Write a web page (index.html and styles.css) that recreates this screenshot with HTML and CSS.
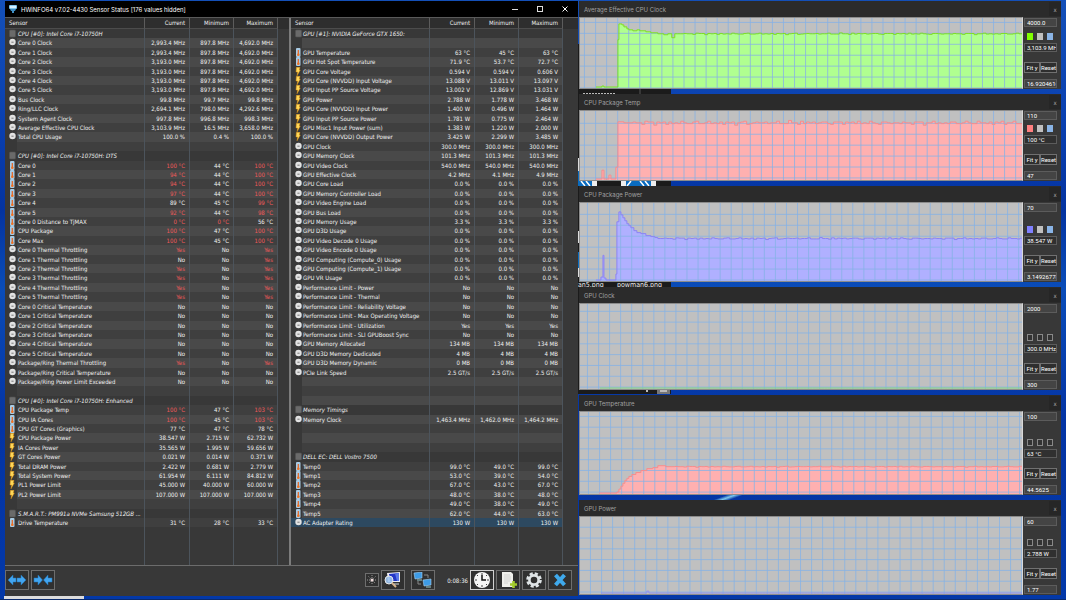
FILE: index.html
```html
<!DOCTYPE html>
<html lang="en">
<head>
<meta charset="UTF-8">
<meta name="viewport" content="width=device-width, initial-scale=1">
<title>HWiNFO64 v7.02-4430 Sensor Status</title>
<link rel="stylesheet" href="styles.css">
</head>
<body>

  <!-- Shared row icons -->
  <svg class="symbols" aria-hidden="true">
    <symbol id="icon-clock" viewBox="0 0 8 9">
      <circle cx="4.500" cy="4" r="3.200" fill="#e2e2e2"/>
      <path d="M3.400 4.200H5.600" stroke="#777"/>
    </symbol>
    <symbol id="icon-temp" viewBox="0 0 8 9">
      <rect x="2" y="0" width="4.500" height="9" rx="1" fill="#a9cbe4"/>
      <path d="M4.300 2V6" stroke="#e8641e" stroke-width="1.200"/>
      <circle cx="4.300" cy="6.800" r="1.300" fill="#f07020"/>
    </symbol>
    <symbol id="icon-power" viewBox="0 0 8 9">
      <path d="M2.400 0.300H6L5.300 3H6.300L3 8.800L3.600 5H2Z" fill="#ffd95a" stroke="#d98a10" stroke-width="0.500"/>
    </symbol>
    <symbol id="icon-chip" viewBox="0 0 8 9">
      <rect x="1.500" y="1" width="6" height="7" rx="1" fill="#6a6a6a" stroke="#525252" stroke-width="0.600"/>
    </symbol>
  </svg>

  <!-- Image folder that lies behind the other windows -->
  <div class="explorer" aria-hidden="true">
    <svg class="explorer-bits" viewBox="0 0 93 350">
      <path d="M5 49.500H37" stroke="#bbb" stroke-dasharray="2 1"/>
      <path d="M62 45V51" stroke="#555"/>
      <rect x="0" y="114" width="2" height="13" fill="#ddd"/>
      <rect x="0" y="127" width="19" height="15" fill="#0a6cc0"/>
      <path d="M3 137L7 142M8 137L12 142" stroke="#fff" stroke-width="1.500"/>
      <rect x="14" y="137" width="5" height="5" fill="#eee"/>
      <rect x="43" y="137" width="35" height="5" fill="#0a6cc0"/>
      <rect x="43" y="137" width="5" height="5" fill="#eee"/>
      <rect x="73" y="137" width="5" height="5" fill="#eee"/>
      <path d="M53 137L49 142M62 137L66 142M67 137L71 142" stroke="#fff" stroke-width="1.500"/>
      <rect x="0" y="187" width="2" height="12" fill="#ddd"/>
      <rect x="0" y="208" width="2" height="16" fill="#0a6cc0"/>
      <rect x="0" y="224" width="2" height="9" fill="#ddd"/>
      <rect x="79" y="346" width="13" height="4" fill="#777"/>
      <rect x="82" y="346" width="7" height="2" fill="#bbb"/>
      <rect x="68" y="346" width="2" height="2" fill="#bbb"/>
    </svg>
    <span class="file-name file-name-a">an5.png</span>
    <span class="file-name file-name-b">powman6.png</span>
  </div>
  <div class="wallpaper-glow" aria-hidden="true"></div>

  <main class="windows">

    <!-- Sensor status window -->
    <section class="sensors" aria-label="Sensor Status">
      <header class="titlebar">
        <svg class="app-icon" viewBox="0 0 8 8" aria-hidden="true">
          <rect x="0" y="0" width="8" height="4" rx="1" fill="#7fc4e8"/>
          <rect x="1" y="1" width="6" height="2" fill="#d8f0ff"/>
          <path d="M1 4H7L6 6H5V8H3V6H2Z" fill="#3f8fc4"/>
        </svg>
        <h1 class="titlebar-text">HWiNFO64 v7.02-4430 Sensor Status [176 values hidden]</h1>
        <button class="window-button" aria-label="Minimize">
          <svg viewBox="0 0 8 8"><path d="M1 4.500H7" stroke="#ddd" fill="none"/></svg>
        </button>
        <button class="window-button" aria-label="Maximize">
          <svg viewBox="0 0 8 8"><rect x="1.500" y="1.500" width="5" height="5" stroke="#ddd" fill="none"/></svg>
        </button>
        <button class="window-button" aria-label="Close">
          <svg viewBox="0 0 8 8"><path d="M1.500 1.500L6.500 6.500M6.500 1.500L1.500 6.500" stroke="#fff" fill="none"/></svg>
        </button>
      </header>

      <div class="panes">
        <table class="pane pane-left">
          <thead>
            <tr><th scope="col" class="head-name">Sensor</th><th scope="col">Current</th><th scope="col">Minimum</th><th scope="col">Maximum</th></tr>
          </thead>
          <tbody id="cpuRows"></tbody>
        </table>
        <table class="pane pane-right">
          <thead>
            <tr><th scope="col" class="head-name">Sensor</th><th scope="col">Current</th><th scope="col">Minimum</th><th scope="col">Maximum</th></tr>
          </thead>
          <tbody id="gpuRows"></tbody>
        </table>
      </div>

      <footer class="toolbar">
        <div class="tool-group">
          <button class="tool" aria-label="Expand columns">
            <svg viewBox="0 0 20 16"><path d="M1 8L6 3V6H9V10H6V13ZM19 8L14 3V6H10V10H14V13Z" fill="#42a5f0" stroke="#2277b8" stroke-width="0.500"/></svg>
          </button>
          <button class="tool" aria-label="Shrink columns">
            <svg viewBox="0 0 20 16"><path d="M9.500 8L5 3V6H1V10H5V13ZM10.500 8L15 3V6H19V10H15V13Z" fill="#42a5f0" stroke="#2277b8" stroke-width="0.500"/></svg>
          </button>
        </div>
        <div class="tool-group">
          <button class="tool tool-small" aria-label="Hide sensors">
            <svg viewBox="0 0 12 12"><path d="M6 1V11M1 6H11M2.500 2.500L9.500 9.500M9.500 2.500L2.500 9.500" stroke="#999" stroke-dasharray="1 1"/><circle cx="6" cy="6" r="1.500" fill="#f3dede"/></svg>
          </button>
          <button class="tool" aria-label="System summary">
            <svg viewBox="0 0 20 16"><path d="M4 1L17 0V10H5Z" fill="#ececf4"/><path d="M6 2L16 1V9H7Z" fill="#2436c8"/><path d="M12 1.500L16 1V9H14Z" fill="#5a78e8"/><circle cx="6" cy="8" r="4" fill="#9fc4f0" fill-opacity="0.900" stroke="#e8e8e8"/><path d="M9 11L13 15" stroke="#d8b48a" stroke-width="2"/><path d="M11 12H16" stroke="#ddd"/></svg>
          </button>
          <button class="tool tool-network" aria-label="Network sensors">
            <svg viewBox="0 0 20 16"><path d="M11 3H15V6M5 9V12H8" stroke="#888" fill="none"/><path d="M1 1L9 0V6L2 7Z" fill="#3d9be6" stroke="#a8d4f4" stroke-width="0.600"/><path d="M4 8H9" stroke="#9cc"/><path d="M10 8L18 7V13L11 14Z" fill="#3d9be6" stroke="#a8d4f4" stroke-width="0.600"/><path d="M13 15H18" stroke="#9cc"/></svg>
          </button>
          <time class="elapsed">0:08:36</time>
          <button class="tool tool-active" aria-label="Reset clock">
            <svg viewBox="0 0 20 16"><circle cx="10" cy="8" r="8" fill="#f6f6f6"/><path d="M10 1V3M10 13V15M3 8H5M15 8H17M5 3L6 4M15 3L14 4M5 13L6 12M15 13L14 12" stroke="#444"/><path d="M10 3V8H14" stroke="#111" stroke-width="1.500" fill="none"/></svg>
          </button>
          <button class="tool" aria-label="Start logging">
            <svg viewBox="0 0 20 16"><path d="M4 0H13L15 2V15H4Z" fill="#f0f0ec"/><path d="M6 3H12M6 5H13M6 7H13M6 9H12M6 11H10" stroke="#c4c4c4" stroke-width="0.600"/><path d="M15.500 9V16M12 12.500H19" stroke="#a4cc2c" stroke-width="2.600"/></svg>
          </button>
          <button class="tool" aria-label="Settings">
            <svg viewBox="0 0 20 16"><circle cx="10" cy="8" r="6.500" fill="none" stroke="#dfe4e6" stroke-width="2.600" stroke-dasharray="3.100 2"/><circle cx="10" cy="8" r="4.600" fill="none" stroke="#dfe4e6" stroke-width="2.600"/></svg>
          </button>
          <button class="tool" aria-label="Close sensors">
            <svg viewBox="0 0 20 16"><path d="M5.500 3L14.500 13M14.500 3L5.500 13" stroke="#3fa9ec" stroke-width="4"/></svg>
          </button>
        </div>
      </footer>
    </section>

    <!-- Graph windows, filled by script.js -->
    <div class="graphs" id="graphs"></div>
  </main>

  <footer class="desktop-edge"><div class="preview"></div></footer>

<script src="script.js"></script>
</body>
</html>
```
FILE: styles.css
```css
* {
  box-sizing: border-box;
}
body {
  margin: 0;
  height: 100vh;
  display: flex;
  flex-direction: column;
  overflow: hidden;
  position: relative;
  background: linear-gradient(180deg, #1450b8 0%, #0a40b0 20%, #0433a0 35%, #0a4cb8 48%, #0434a4 70%, #0338a8 100%);
  color: #f0f0f0;
  font-family: "DejaVu Sans Condensed", "DejaVu Sans", sans-serif;
  font-size: 6px;
  line-height: 9px;
}
button, input {
  font: inherit;
  color: inherit;
  margin: 0;
  padding: 0;
  border-radius: 0;
}
.symbols {
  display: none;
}

/* Desktop behind the windows */
.explorer {
  position: absolute;
  left: 578px;
  top: 44px;
  width: 93px;
  height: 350px;
  background: #1b1b1b;
  overflow: hidden;
}
.explorer-bits {
  display: block;
  width: 93px;
  height: 350px;
}
.file-name {
  position: absolute;
  top: 237px;
  font-size: 7px;
}
.file-name-a {
  left: 0;
}
.file-name-b {
  left: 39px;
}
.wallpaper-glow {
  position: absolute;
  left: 670px;
  top: 480px;
  width: 130px;
  height: 30px;
  background: linear-gradient(160deg, transparent 46%, #7cc8ec 50%, transparent 54%);
}
.windows {
  flex: 1;
  min-height: 0;
  display: flex;
  gap: 1px;
  padding: 1px 5px 0;
  position: relative;
}

/* Sensor window */
.sensors {
  flex: 573 1 0;
  min-width: 0;
  display: flex;
  flex-direction: column;
  background: #383838;
}
.titlebar {
  height: 16px;
  flex: none;
  display: flex;
  align-items: center;
  background: #000;
  padding: 0 4px;
}
.app-icon {
  width: 8px;
  height: 8px;
}
.titlebar-text {
  flex: 1;
  margin: 0 0 0 4px;
  font-family: Inter, sans-serif;
  font-size: 6px;
  font-weight: 400;
  color: #fff;
}
.window-button {
  width: 18px;
  height: 16px;
  margin-left: 7px;
  background: none;
  border: none;
  display: flex;
  align-items: center;
  justify-content: center;
}
.window-button svg {
  width: 8px;
  height: 8px;
}
.panes {
  flex: 1;
  min-height: 0;
  display: flex;
  border-top: 1px solid #5a5a5a;
  border-bottom: 1px solid #6c6c6c;
}

/* Sensor tables */
.pane {
  display: flex;
  flex-direction: column;
  min-width: 0;
}
.pane-left {
  flex: 285 1 0;
  --columns: 12px minmax(0, 1fr) 45px 44px 44px 11px;
}
.pane-right {
  flex: 288 1 0;
  border-left: 2px solid #7c7c7c;
  --columns: 11px minmax(0, 1fr) 45px 44px 44px 15px;
}
.pane thead {
  display: block;
  background: #2e2e2e;
}
.pane tbody {
  flex: 1;
  min-height: 0;
  display: grid;
  grid-template-rows: repeat(57, minmax(0, 1fr));
}
.pane tr {
  display: grid;
  grid-template-columns: var(--columns);
}
.pane th,
.pane td {
  padding: 0 4px 0 0;
  border-right: 1px solid #4c545c;
  text-align: right;
  font-weight: 400;
  white-space: nowrap;
}
.pane th {
  height: 11px;
  line-height: 9px;
  border-right-color: #5c5c5c;
  border-bottom: 1px solid #4c4c4c;
}
.pane .head-name {
  grid-column: 1 / 3;
  text-align: left;
  padding-left: 4px;
}
.pane .icon-cell {
  padding: 0;
  border: none;
  text-align: left;
}
.pane .name-cell {
  text-align: left;
  padding: 0 0 0 1px;
  overflow: hidden;
}
.dark td {
  background: #3f3f3f;
}
.light td {
  background: #494949;
}
.dark .icon-cell,
.light .icon-cell {
  background: none;
}
.category .name-cell {
  font-style: italic;
}
.selected {
  background: linear-gradient(#2d4960, #2d4960) 0 0 / calc(100% - 15px) 100% no-repeat;
}
.filler {
  grid-row: span 4;
}
.row-icon {
  display: block;
  width: 8px;
  height: 9px;
  margin-left: 3px;
}
.alert {
  color: #f05a5a;
}

/* Bottom toolbar */
.toolbar {
  flex: none;
  height: 30px;
  display: flex;
  justify-content: space-between;
  align-items: flex-start;
  padding: 4px 6px 0 0;
}
.tool-group {
  display: flex;
  align-items: center;
  gap: 2px;
}
.tool {
  width: 24px;
  height: 20px;
  display: flex;
  align-items: center;
  justify-content: center;
  background: #303030;
  border: 1px solid #6e6e6e;
}
.tool svg {
  width: 20px;
  height: 16px;
}
.tool-small {
  width: 14px;
  height: 14px;
}
.tool-small svg {
  width: 12px;
  height: 12px;
}
.tool-network {
  margin-left: 4px;
}
.tool-active {
  border-color: #d0d0d0;
}
.elapsed {
  margin-left: 10px;
}

/* Graph windows */
.graphs {
  flex: 482 1 0;
  min-width: 0;
  display: flex;
  flex-direction: column;
  gap: 5px;
  padding-bottom: 1px;
}
.graph {
  min-height: 0;
  display: flex;
  flex-direction: column;
  background: #383838;
}
.graph-avg-clock { flex: 88 1 0; }
.graph-package-temp { flex: 87 1 0; }
.graph-package-power { flex: 96 1 0; }
.graph-gpu-clock { flex: 103 1 0; }
.graph-gpu-temp { flex: 100 1 0; }
.graph-gpu-power { flex: 95 1 0; }

.graph-title {
  flex: none;
  height: 16px;
  display: flex;
  justify-content: space-between;
  align-items: center;
  padding: 0 0 0 5px;
  background: #2b2b2b;
}
.graph-title h2 {
  margin: 0;
  font-family: Inter, sans-serif;
  font-size: 6px;
  font-weight: 400;
  color: #a0a0a0;
}
.graph-close {
  width: 12px;
  height: 14px;
  background: #262626;
  border: none;
  color: #aaa;
}
.graph-body {
  flex: 1;
  min-height: 0;
  display: flex;
}
.plot {
  flex: 1;
  min-width: 0;
  border: 1px solid #8c8c8c;
  border-right-color: #d8d8d8;
  background: #c0c0c0;
}
.plot svg {
  display: block;
  width: 100%;
  height: 100%;
}
.grid-lines {
  stroke: #86b2e6;
  stroke-opacity: 0.8;
  fill: none;
}
.side {
  flex: none;
  width: 38px;
  padding: 1px 4px 1px 1px;
  display: flex;
  flex-direction: column;
  font-family: Roboto, sans-serif;
}
.field {
  display: block;
  width: 33px;
  height: 9px;
  padding: 0 0 0 2px;
  background: #444;
  border: 1px solid #5c5c5c;
  color: #fff;
}
.field-value {
  background: #303030;
}
.swatches {
  display: flex;
  gap: 4px;
  margin-top: auto;
  padding: 0 3px 3px;
}
.swatch {
  width: 6px;
  height: 7px;
  border: 1px solid #888;
  background: #333;
}
.swatch-green { background: #80ff00; border-color: #80ff00; }
.swatch-red { background: #ff8080; border-color: #ff8080; }
.swatch-purple { background: #8080ff; border-color: #8080ff; }
.swatch-grey { background: #c0c0c0; border-color: #c0c0c0; }
.swatch-blue { background: #8ab4e6; border-color: #8ab4e6; }
.graph-buttons {
  display: flex;
  padding: 10px 0 6px;
}
.graph-buttons button {
  flex: none;
  width: 16px;
  height: 11px;
  background: #2e2e2e;
  border: 1px solid #707070;
  white-space: nowrap;
  display: flex;
  align-items: center;
  justify-content: center;
  color: #fff;
}
.graph-buttons button:last-child {
  width: 17px;
}

/* Strip below the windows */
.desktop-edge {
  flex: none;
  height: 4px;
  padding-left: 4px;
  border-bottom: 1px solid #0a2a6c;
  position: relative;
}
.preview {
  width: 80px;
  height: 3px;
  background: #dcdcdc;
}
```
FILE: script.js
```js
// Rows: kind|name|current|minimum|maximum, a leading ! marks a value over its limit
const cpuData = `
chip|CPU [#0]: Intel Core i7-10750H
clock|Core 0 Clock|2,993.4 MHz|897.8 MHz|4,692.0 MHz
clock|Core 1 Clock|2,993.4 MHz|897.8 MHz|4,692.0 MHz
clock|Core 2 Clock|3,193.0 MHz|897.8 MHz|4,692.0 MHz
clock|Core 3 Clock|3,193.0 MHz|897.8 MHz|4,692.0 MHz
clock|Core 4 Clock|3,193.0 MHz|897.8 MHz|4,692.0 MHz
clock|Core 5 Clock|3,193.0 MHz|897.8 MHz|4,692.0 MHz
clock|Bus Clock|99.8 MHz|99.7 MHz|99.8 MHz
clock|Ring/LLC Clock|2,694.1 MHz|798.0 MHz|4,292.6 MHz
clock|System Agent Clock|997.8 MHz|996.8 MHz|998.3 MHz
clock|Average Effective CPU Clock|3,103.9 MHz|16.5 MHz|3,658.0 MHz
clock|Total CPU Usage|100.0 %|0.4 %|100.0 %
blank
chip|CPU [#0]: Intel Core i7-10750H: DTS
temp|Core 0|!100 °C|44 °C|!100 °C
temp|Core 1|!94 °C|44 °C|!100 °C
temp|Core 2|!94 °C|44 °C|!100 °C
temp|Core 3|!97 °C|44 °C|!100 °C
temp|Core 4|89 °C|45 °C|!99 °C
temp|Core 5|!92 °C|44 °C|!98 °C
temp|Core 0 Distance to TjMAX|!0 °C|!0 °C|56 °C
temp|CPU Package|!100 °C|47 °C|!100 °C
temp|Core Max|!100 °C|45 °C|!100 °C
clock|Core 0 Thermal Throttling|!Yes|No|!Yes
clock|Core 1 Thermal Throttling|No|No|!Yes
clock|Core 2 Thermal Throttling|!Yes|No|!Yes
clock|Core 3 Thermal Throttling|!Yes|No|!Yes
clock|Core 4 Thermal Throttling|!Yes|No|!Yes
clock|Core 5 Thermal Throttling|!Yes|No|!Yes
clock|Core 0 Critical Temperature|No|No|No
clock|Core 1 Critical Temperature|No|No|No
clock|Core 2 Critical Temperature|No|No|No
clock|Core 3 Critical Temperature|No|No|No
clock|Core 4 Critical Temperature|No|No|No
clock|Core 5 Critical Temperature|No|No|No
clock|Package/Ring Thermal Throttling|!Yes|No|!Yes
clock|Package/Ring Critical Temperature|No|No|No
clock|Package/Ring Power Limit Exceeded|No|No|No
blank
chip|CPU [#0]: Intel Core i7-10750H: Enhanced
temp|CPU Package Temp|!100 °C|47 °C|!103 °C
temp|CPU IA Cores|!100 °C|45 °C|!103 °C
temp|CPU GT Cores (Graphics)|77 °C|47 °C|78 °C
power|CPU Package Power|38.547 W|2.715 W|62.732 W
power|IA Cores Power|35.565 W|1.995 W|59.656 W
power|GT Cores Power|0.021 W|0.014 W|0.371 W
power|Total DRAM Power|2.422 W|0.681 W|2.779 W
power|Total System Power|61.954 W|6.111 W|84.812 W
power|PL1 Power Limit|45.000 W|40.000 W|60.000 W
power|PL2 Power Limit|107.000 W|107.000 W|107.000 W
blank
chip|S.M.A.R.T.: PM991a NVMe Samsung 512GB ...
temp|Drive Temperature|31 °C|28 °C|33 °C`;

const gpuData = `
chip|GPU [#1]: NVIDIA GeForce GTX 1650:
blank
temp|GPU Temperature|63 °C|45 °C|63 °C
temp|GPU Hot Spot Temperature|71.9 °C|53.7 °C|72.7 °C
power|GPU Core Voltage|0.594 V|0.594 V|0.606 V
power|GPU Core (NVVDD) Input Voltage|13.088 V|13.011 V|13.097 V
power|GPU Input PP Source Voltage|13.002 V|12.869 V|13.031 V
power|GPU Power|2.788 W|1.778 W|3.468 W
power|GPU Core (NVVDD) Input Power|1.400 W|0.496 W|1.464 W
power|GPU Input PP Source Power|1.781 W|0.775 W|2.464 W
power|GPU Misc1 Input Power (sum)|1.383 W|1.220 W|2.000 W
power|GPU Core (NVVDD) Output Power|3.425 W|2.299 W|3.485 W
clock|GPU Clock|300.0 MHz|300.0 MHz|300.0 MHz
clock|GPU Memory Clock|101.3 MHz|101.3 MHz|101.3 MHz
clock|GPU Video Clock|540.0 MHz|540.0 MHz|540.0 MHz
clock|GPU Effective Clock|4.2 MHz|4.1 MHz|4.9 MHz
clock|GPU Core Load|0.0 %|0.0 %|0.0 %
clock|GPU Memory Controller Load|0.0 %|0.0 %|0.0 %
clock|GPU Video Engine Load|0.0 %|0.0 %|0.0 %
clock|GPU Bus Load|0.0 %|0.0 %|0.0 %
clock|GPU Memory Usage|3.3 %|3.3 %|3.3 %
clock|GPU D3D Usage|0.0 %|0.0 %|0.0 %
clock|GPU Video Decode 0 Usage|0.0 %|0.0 %|0.0 %
clock|GPU Video Encode 0 Usage|0.0 %|0.0 %|0.0 %
clock|GPU Computing (Compute_0) Usage|0.0 %|0.0 %|0.0 %
clock|GPU Computing (Compute_1) Usage|0.0 %|0.0 %|0.0 %
clock|GPU VR Usage|0.0 %|0.0 %|0.0 %
clock|Performance Limit - Power|No|No|No
clock|Performance Limit - Thermal|No|No|No
clock|Performance Limit - Reliability Voltage|No|No|No
clock|Performance Limit - Max Operating Voltage|No|No|No
clock|Performance Limit - Utilization|Yes|Yes|Yes
clock|Performance Limit - SLI GPUBoost Sync|No|No|No
clock|GPU Memory Allocated|134 MB|134 MB|134 MB
clock|GPU D3D Memory Dedicated|4 MB|4 MB|4 MB
clock|GPU D3D Memory Dynamic|0 MB|0 MB|0 MB
clock|PCIe Link Speed|2.5 GT/s|2.5 GT/s|2.5 GT/s
blank
blank
blank
chip|Memory Timings
clock|Memory Clock|1,463.4 MHz|1,462.0 MHz|1,464.2 MHz
blank
blank
blank
chip|DELL EC: DELL Vostro 7500
temp|Temp0|99.0 °C|49.0 °C|99.0 °C
temp|Temp1|53.0 °C|39.0 °C|54.0 °C
temp|Temp2|67.0 °C|43.0 °C|67.0 °C
temp|Temp3|48.0 °C|38.0 °C|48.0 °C
temp|Temp4|49.0 °C|38.0 °C|49.0 °C
temp|Temp5|62.0 °C|44.0 °C|63.0 °C
clock|AC Adapter Rating|130 W|130 W|130 W`;

function valueCell(value) {
  if (!value) return '<td></td>';
  return value[0] === '!' ? `<td class="alert">${value.slice(1)}</td>` : `<td>${value}</td>`;
}

function fillTable(id, data) {
  const rows = data.trim().split('\n').map((line, i) => {
    const [kind, name, current, minimum, maximum] = line.split('|');
    let rowClass = i % 2 ? 'light' : 'dark';
    if (kind === 'chip') rowClass = 'category';
    if (name === 'AC Adapter Rating') rowClass = 'selected';
    const icon = kind === 'blank' ? '' : `<svg class="row-icon" aria-hidden="true"><use href="#icon-${kind}"/></svg>`;
    return `<tr class="${rowClass}"><td class="icon-cell">${icon}</td><td class="name-cell">${name || ''}</td>` +
      valueCell(current) + valueCell(minimum) + valueCell(maximum) + '</tr>';
  });
  rows.push('<tr class="filler"><td class="icon-cell"></td><td></td><td></td><td></td><td></td></tr>');
  document.getElementById(id).innerHTML = rows.join('');
}

fillTable('cpuRows', cpuData);
fillTable('gpuRows', gpuData);

// Graphs: points are [x, y] in the plot's own 443-wide space, then the line settles at level
const graphs = [
  { key: 'avg-clock', title: 'Average Effective CPU Clock', max: '4000.0', value: '3,103.9 MHz', min: '16.92046163', h: 71, gx: 4, gy: 4,
    line: '#80e020', fill: '#b0ff90', swatch: 'green', level: 16, noise: 0.6,
    points: [[16, 70], [22, 69], [24, 70], [38, 22], [39, 6], [42, 7], [44, 9], [47, 11], [49, 12], [53, 13], [57, 12], [60, 13], [66, 14], [71, 15], [78, 16], [84, 17], [88, 16], [92, 20], [95, 16]] },
  { key: 'package-temp', title: 'CPU Package Temp', max: '110', value: '100 °C', min: '47', h: 70, gx: 4, gy: 12,
    line: '#f88c8c', fill: '#ffb0b0', swatch: 'red', level: 12, noise: 1.6,
    points: [[16, 69], [22, 60], [24, 69], [29, 65], [31, 69], [36, 57], [38, 11], [44, 12]] },
  { key: 'package-power', title: 'CPU Package Power', max: '70', value: '38.547 W', min: '3.149267782', h: 79, gx: 7, gy: 11,
    line: '#8c84f4', fill: '#b0b0ff', swatch: 'purple', level: 36, noise: 0.7,
    points: [[16, 78], [21, 75], [23, 53], [24, 76], [26, 78], [36, 72], [37, 19], [39, 9], [41, 12], [43, 15], [45, 18], [47, 21], [49, 23], [51, 25], [54, 28], [57, 30], [61, 31], [66, 33], [71, 34], [75, 35]] },
  { key: 'gpu-clock', title: 'GPU Clock', max: '2000', value: '300.0 MHz', min: '300', h: 87, gx: 7, gy: 7,
    line: '#80d880', fill: 'none', level: 86, noise: 0, points: [[20, 86]] },
  { key: 'gpu-temp', title: 'GPU Temperature', max: '100', value: '63 °C', min: '44.5625', h: 84, gx: 8, gy: 4,
    line: '#f88c8c', fill: '#ffb0b0', level: 56, noise: 0.4,
    points: [[19, 83], [37, 82], [39, 79], [41, 76], [43, 73], [45, 70], [47, 68], [49, 66], [52, 64], [56, 62], [61, 60], [67, 58], [73, 57], [78, 55], [86, 56]] },
  { key: 'gpu-power', title: 'GPU Power', max: '60', value: '2.788 W', min: '1.77', h: 79, gx: 10, gy: 10,
    line: '#9090f0', fill: 'none', level: 78, noise: 0, points: [[21, 78], [67, 76], [69, 78]] }
];

function stepPath(g) {
  const pts = g.points.slice();
  for (let x = pts[pts.length - 1][0] + 3, i = 0; x < 443; x += 3, i++) {
    const wave = Math.sin(i * 2.3) * Math.cos(i * 0.7) + Math.sin(i * 5.1) * 0.4;
    pts.push([x, (g.level + Math.round(wave * 2) / 2 * g.noise).toFixed(1)]);
  }
  return `M${pts[0][0]} ${g.h - 1}` + pts.map(p => `H${p[0]}V${p[1]}`).join('') + 'H443';
}

function gridPath(g) {
  const step = 11.08;
  let d = '';
  for (let x = g.gx + 0.5; x < 443; x += step) d += `M${x.toFixed(2)} 0V${g.h}`;
  for (let y = g.gy + 0.5; y < g.h; y += step) d += `M0 ${y.toFixed(2)}H443`;
  return d;
}

document.getElementById('graphs').innerHTML = graphs.map(g => {
  const path = stepPath(g);
  const swatches = g.swatch ? [` swatch-${g.swatch}`, ' swatch-grey', ' swatch-blue'] : ['', '', ''];
  const labels = ['Line colour', 'Background colour', 'Grid colour'];
  return `
  <section class="graph graph-${g.key}" aria-label="${g.title}">
    <header class="graph-title"><h2>${g.title}</h2><button class="graph-close" aria-label="Close graph">x</button></header>
    <div class="graph-body">
      <div class="plot">
        <svg viewBox="0 0 443 ${g.h}" preserveAspectRatio="none" aria-hidden="true">
          <path d="${path}V${g.h}H${g.points[0][0]}Z" fill="${g.fill}"/>
          <path class="grid-lines" d="${gridPath(g)}"/>
          <path d="${path}" fill="none" stroke="${g.line}"/>
        </svg>
      </div>
      <div class="side">
        <input class="field" value="${g.max}" aria-label="Graph maximum">
        <div class="swatches">${swatches.map((s, i) => `<button class="swatch${s}" aria-label="${labels[i]}"></button>`).join('')}</div>
        <input class="field field-value" value="${g.value}" aria-label="Current value" readonly>
        <div class="graph-buttons"><button>Fit y</button><button>Reset</button></div>
        <input class="field" value="${g.min}" aria-label="Graph minimum">
      </div>
    </div>
  </section>`;
}).join('');
```
